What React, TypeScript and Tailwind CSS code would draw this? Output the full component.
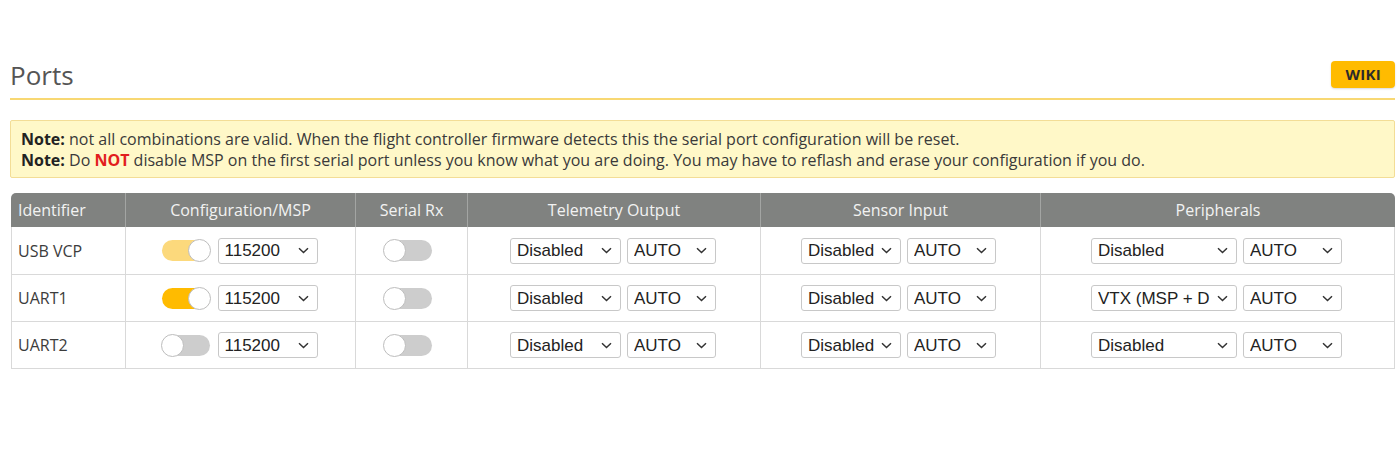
import React from "react";

const Chevron = () => (
  <svg width="11" height="7" viewBox="0 0 11 7" className="shrink-0">
    <path d="M1 1.2 L5.5 5.5 L10 1.2" fill="none" stroke="#333" strokeWidth="1.5" />
  </svg>
);

function Select({ value, w }: { value: string; w: string }) {
  return (
    <div
      className={`${w} h-[26px] flex items-center justify-between pl-[6px] pr-[8px] bg-white border border-[#c8c8c8] rounded-[3px] text-[17px] text-[#222] leading-none overflow-hidden whitespace-nowrap`}
      style={{ fontFamily: '"Liberation Sans", Arial, sans-serif' }}
    >
      <span className="overflow-hidden">{value}</span>
      <Chevron />
    </div>
  );
}

function Toggle({ state }: { state: "on" | "dim" | "off" }) {
  const bg = state === "on" ? "bg-[#ffbb00]" : state === "dim" ? "bg-[#fcd97c]" : "bg-[#cdcdcd]";
  return (
    <div className={`relative w-[48px] h-[21px] rounded-full ${bg} shrink-0`}>
      <div
        className={`absolute top-[-1px] w-[23px] h-[23px] rounded-full bg-white border border-[#bdbdbd] ${
          state === "off" ? "left-[-1px]" : "right-[-1px]"
        }`}
      />
    </div>
  );
}

const rows = [
  { id: "USB VCP", msp: "dim" as const, periph: "Disabled" },
  { id: "UART1", msp: "on" as const, periph: "VTX (MSP + D" },
  { id: "UART2", msp: "off" as const, periph: "Disabled" },
];

export default function App() {
  const font = { fontFamily: '"Open Sans", "Noto Sans", sans-serif' };
  return (
    <div className="w-[1400px] h-[455px] bg-white pl-[10px] pr-[5px] pt-[58px]" style={font}>
      <div className="flex items-center justify-between h-[32px]">
        <div className="text-[26px] text-[#555] leading-none pt-[2px]">Ports</div>
        <div className="h-[27px] px-[14px] rounded-[4px] bg-[#ffbb00] flex items-center text-[15px] font-bold text-[#2b2b2b] tracking-[0.3px] shadow-[0_1px_2px_rgba(0,0,0,0.15)]">
          WIKI
        </div>
      </div>
      <div className="mt-[8px] h-[2px] bg-[#f8d873]" />
      <div className="mt-[20px] h-[58px] border border-[#f3dd96] bg-[#fff8c8] rounded-[2px] px-[10px] pt-[8px] text-[16px] leading-[21px] text-[#3a3a3a]">
        <div>
          <b className="text-[#222]">Note:</b> not all combinations are valid. When the flight controller firmware detects this the serial port configuration will be reset.
        </div>
        <div>
          <b className="text-[#222]">Note:</b> Do <b className="text-[#e21d1d]">NOT</b> disable MSP on the first serial port unless you know what you are doing. You may have to reflash and erase your configuration if you do.
        </div>
      </div>
      <div className="mt-[15px] ml-[1px] w-[1384px]">
        <div className="grid grid-cols-[114px_230px_112px_293px_280px_355px] h-[34px] bg-[#808280] rounded-t-[5px] text-[16px] text-[#f2f2f2]">
          <div className="flex items-center pl-[7px]">Identifier</div>
          <div className="flex items-center justify-center border-l border-[#a3a5a3]">Configuration/MSP</div>
          <div className="flex items-center justify-center border-l border-[#a3a5a3]">Serial Rx</div>
          <div className="flex items-center justify-center border-l border-[#a3a5a3]">Telemetry Output</div>
          <div className="flex items-center justify-center border-l border-[#a3a5a3]">Sensor Input</div>
          <div className="flex items-center justify-center border-l border-[#a3a5a3]">Peripherals</div>
        </div>
        <div className="border-x border-b border-[#d9d9d9]">
          {rows.map((r, i) => (
            <div
              key={r.id}
              className={`grid grid-cols-[113px_230px_112px_293px_280px_354px] h-[47px] ${i > 0 ? "border-t border-[#d9d9d9]" : ""}`}
            >
              <div className="flex items-center pl-[6px] text-[16px] text-[#3c3c3c]">{r.id}</div>
              <div className="flex items-center justify-center gap-[8px] border-l border-[#d9d9d9] pr-[2px]">
                <Toggle state={r.msp} />
                <Select value="115200" w="w-[100px]" />
              </div>
              <div className="flex items-center justify-center border-l border-[#d9d9d9] pr-[7px]">
                <Toggle state="off" />
              </div>
              <div className="flex items-center justify-center gap-[6px] border-l border-[#d9d9d9] pr-[2px]">
                <Select value="Disabled" w="w-[111px]" />
                <Select value="AUTO" w="w-[89px]" />
              </div>
              <div className="flex items-center justify-center gap-[6px] border-l border-[#d9d9d9] pr-[4px]">
                <Select value="Disabled" w="w-[100px]" />
                <Select value="AUTO" w="w-[89px]" />
              </div>
              <div className="flex items-center justify-center gap-[6px] border-l border-[#d9d9d9] pr-[2px]">
                <Select value={r.periph} w="w-[146px]" />
                <Select value="AUTO" w="w-[99px]" />
              </div>
            </div>
          ))}
        </div>
      </div>
    </div>
  );
}
